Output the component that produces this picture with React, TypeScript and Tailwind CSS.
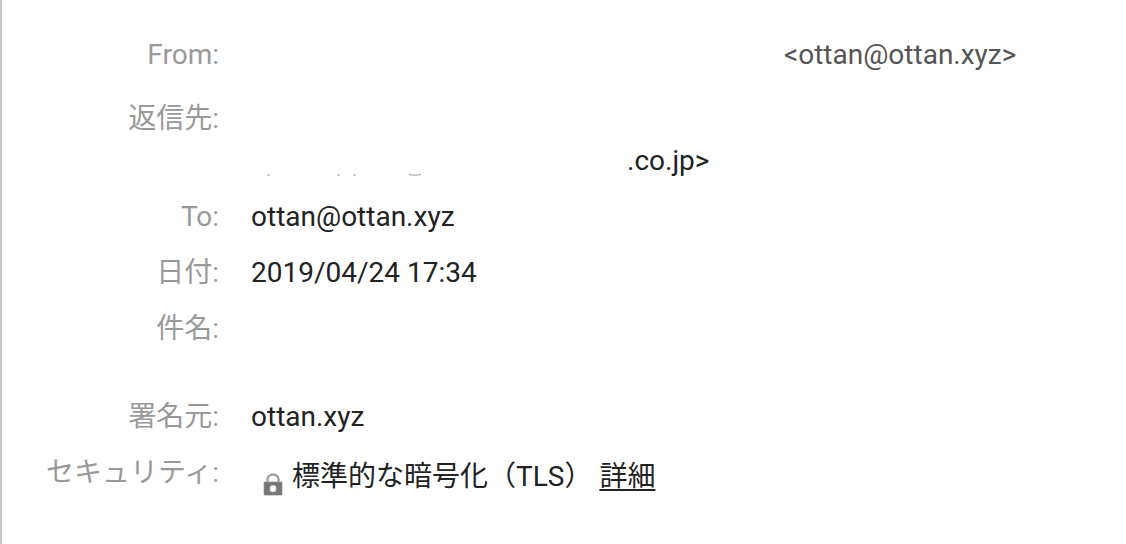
import type { ReactNode } from "react";

function Row({ label, children, className = "" }: { label: string; children?: ReactNode; className?: string }) {
  return (
    <div className={`grid grid-cols-[217px_1fr] gap-x-8 ${className}`}>
      <dt className="whitespace-nowrap text-right text-[#999999]">{label}:</dt>
      <dd className="min-w-0 whitespace-nowrap">{children}</dd>
    </div>
  );
}

function LockIcon() {
  return (
    <svg className="mt-[18px] h-6 w-5 shrink-0" viewBox="0 0 20 24" aria-hidden="true">
      <path d="M4.5 11V6.5a5.5 5 0 0 1 11 0V11" fill="none" stroke="#a0a0a0" strokeWidth="2.4" />
      <rect x="0.6" y="8.6" width="18.8" height="14" rx="1" fill="#a8a8a8" />
      <rect x="1.2" y="9.2" width="17.6" height="12.8" rx="0.8" fill="#757575" />
      <rect x="6.6" y="12" width="6.8" height="7.2" rx="2.5" fill="#bdbdbd" />
      <rect x="7.4" y="12.8" width="5.2" height="5.6" rx="2" fill="#ffffff" />
    </svg>
  );
}

export default function App() {
  return (
    <main className="min-h-screen border-l-2 border-[#c8c8c8] bg-white pt-[33px] font-['Roboto','Noto_Sans_CJK_JP',sans-serif] text-[28px] leading-[44px] text-[#222222]">
      <dl className="flex flex-col gap-3">
        <Row label="From" className="pb-2">
          <span className="ml-[533px] text-[#555555]">&lt;ottan@ottan.xyz&gt;</span>
        </Row>
        <Row label="返信先" className="h-[86px]">
          <div className="flex pt-[42px]">
            <svg className="h-11 w-[376px]" viewBox="0 0 376 44" aria-hidden="true">
              <path d="M16 36h3M86 36h3M102 36h3" stroke="#999999" strokeWidth="1" />
              <path d="M158 35.6q6 1.2 12 0" fill="none" stroke="#999999" strokeWidth="1" />
            </svg>
            <span>.co.jp&gt;</span>
          </div>
        </Row>
        <Row label="To">ottan@ottan.xyz</Row>
        <Row label="日付">2019/04/24 17:34</Row>
        <Row label="件名" className="h-[76px]" />
        <Row label="署名元">ottan.xyz</Row>
        <Row label="セキュリティ">
          <div className="flex pl-3 pt-1">
            <LockIcon />
            <span className="ml-[9px]">標準的な暗号化（TLS）</span>
            <a href="#details" className="ml-[7px] underline decoration-2 underline-offset-[3px]">詳細</a>
          </div>
        </Row>
      </dl>
    </main>
  );
}
